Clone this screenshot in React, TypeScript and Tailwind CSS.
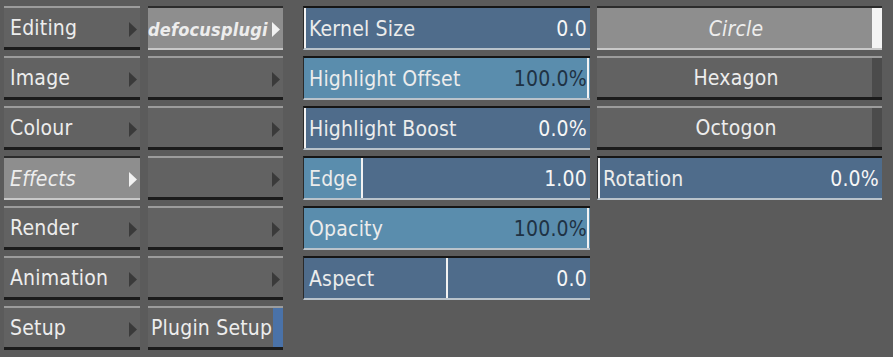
import React from "react";

const FONT = { fontFamily: "'DejaVu Sans Condensed', 'DejaVu Sans', sans-serif" };

function Arrow({ light }: { light?: boolean }) {
  return (
    <svg width="8" height="15" viewBox="0 0 8 15" className="shrink-0">
      <polygon points="0,0 8,7.5 0,15" fill={light ? "#f2f2f2" : "#3a3a3a"} />
    </svg>
  );
}

type BtnProps = {
  label?: string;
  selected?: boolean;
  italic?: boolean;
  bold?: boolean;
  arrow?: boolean;
  center?: boolean;
  pad?: string;
  size?: string;
  stripe?: "white" | "dark" | "blue";
};

function Btn({ label, selected, italic, bold, arrow, center, pad = "pl-[6px]", size = "text-[21px]", stripe }: BtnProps) {
  const base = selected
    ? "border-t-2 border-t-[#2c2c2c] border-b-2 border-b-[#c8c8c8] bg-[#8e8e8e]"
    : "border-t-2 border-t-[#9c9c9c] border-b-[3px] border-b-[#1b1b1b] bg-[#626262]";
  const stripeCls =
    stripe === "white"
      ? "bg-[#f4f4f4]"
      : stripe === "dark"
      ? "bg-[#4b4b4b]"
      : "bg-[#4a72a8]";
  return (
    <div className={`h-[44px] flex ${base}`}>
      <div
        className={`flex-1 min-w-0 flex items-center ${center ? "justify-center" : "justify-between"} ${pad} pr-[3px] pt-[3px] ${size} tracking-[0.2px] text-[#ededed] font-stretch-condensed ${italic ? "italic" : ""} ${bold ? "font-bold" : ""}`}
        style={FONT}
      >
        <span className="whitespace-nowrap min-w-0">{label}</span>
        {arrow && <Arrow light={selected} />}
      </div>
      {stripe && <div className={`w-[10px] shrink-0 ${stripeCls}`} />}
    </div>
  );
}

type SliderProps = {
  label: string;
  value: string;
  fill?: number;
  marker: number;
  darkValue?: boolean;
};

function Slider({ label, value, fill = 0, marker, darkValue }: SliderProps) {
  return (
    <div
      className="h-[44px] border-t-2 border-t-[#161616] border-b-2 border-b-[#b9c3cb] border-l border-l-[#2a2a2a] bg-[#4f6c8b] relative flex items-center justify-between pl-[5px] pr-[3px] pt-[3px] text-[21px] tracking-[0.2px] font-stretch-condensed"
      style={FONT}
    >
      {fill > 0 && (
        <div className="absolute left-0 top-0 bottom-0 bg-[#5a8dad]" style={{ width: `${fill * 100}%` }} />
      )}
      <div
        className="absolute top-0 bottom-0 w-[2px] bg-[#f2f2f2]"
        style={{ left: `calc(${marker * 100}% - ${marker * 3}px)` }}
      />
      <span className="relative text-[#ececec] whitespace-nowrap">{label}</span>
      <span className={`relative whitespace-nowrap ${darkValue ? "text-[#1f3244]" : "text-[#f6f6f6]"}`}>{value}</span>
    </div>
  );
}

export default function App() {
  const col1 = ["Editing", "Image", "Colour", "Effects", "Render", "Animation", "Setup"];
  return (
    <div className="w-[893px] h-[357px] bg-[#5b5b5b] overflow-hidden flex pt-[6px] pl-[4px]">
      <div className="w-[136px] flex flex-col gap-[6px]">
        {col1.map((l) => (
          <Btn key={l} label={l} arrow selected={l === "Effects"} italic={l === "Effects"} />
        ))}
      </div>
      <div className="w-[135px] ml-[8px] flex flex-col gap-[6px]">
        <Btn label="defocusplugi" arrow selected italic bold pad="pl-0" size="text-[18px]" />
        <Btn arrow />
        <Btn arrow />
        <Btn arrow />
        <Btn arrow />
        <Btn arrow />
        <Btn label="Plugin Setup" stripe="blue" pad="pl-[3px]" />
      </div>
      <div className="w-[287px] ml-[20px] flex flex-col gap-[6px]">
        <Slider label="Kernel Size" value="0.0" marker={0} />
        <Slider label="Highlight Offset" value="100.0%" fill={1} marker={1} darkValue />
        <Slider label="Highlight Boost" value="0.0%" marker={0} />
        <Slider label="Edge" value="1.00" fill={0.2} marker={0.2} />
        <Slider label="Opacity" value="100.0%" fill={1} marker={1} darkValue />
        <Slider label="Aspect" value="0.0" marker={0.5} />
      </div>
      <div className="w-[285px] ml-[7px] flex flex-col gap-[6px]">
        <Btn label="Circle" selected italic center stripe="white" />
        <Btn label="Hexagon" center stripe="dark" />
        <Btn label="Octogon" center stripe="dark" />
        <Slider label="Rotation" value="0.0%" marker={0} />
      </div>
    </div>
  );
}
